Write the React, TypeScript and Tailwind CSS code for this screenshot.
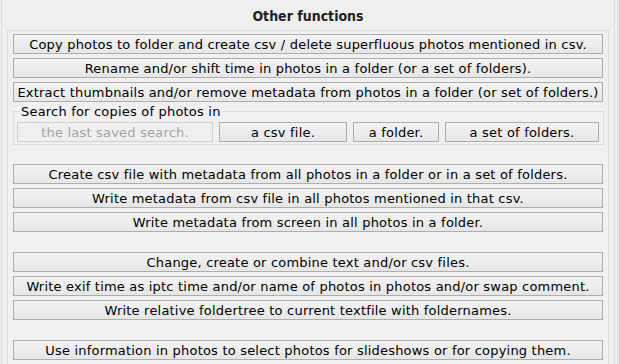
const rowsA = [
  "Copy photos to folder and create csv / delete superfluous photos mentioned in csv.",
  "Rename and/or shift time in photos in a folder (or a set of folders).",
  "Extract thumbnails and/or remove metadata from photos in a folder (or set of folders.)",
];

const rowsB = [
  "Create csv file with metadata from all photos in a folder or in a set of folders.",
  "Write metadata from csv file in all photos mentioned in that csv.",
  "Write metadata from screen in all photos in a folder.",
];

const rowsC = [
  "Change, create or combine text and/or csv files.",
  "Write exif time as iptc time and/or name of photos in photos and/or swap comment.",
  "Write relative foldertree to current textfile with foldernames.",
];

const Btn = ({ label, className = "" }: { label: string; className?: string }) => (
  <button
    className={`h-[20px] border border-[#adadad] bg-linear-to-b from-[#f3f3f3] to-[#e6e6e6] text-[13px] tracking-[0.2px] leading-none text-black whitespace-nowrap flex items-center justify-center ${className}`}
  >
    {label}
  </button>
);

const App = () => {
  return (
    <div
      className="w-[619px] h-[364px] overflow-hidden bg-[#f0f0f0] flex"
      style={{ fontFamily: '"DejaVu Sans", sans-serif' }}
    >
      <div className="ml-[1px] w-[614px] h-full border-x border-[#dcdcdc] bg-[#efefef] flex flex-col">
        <div
          className="h-[30px] shrink-0 flex items-center justify-center pt-[3px] text-[14px] font-bold text-[#1e1e1e]"
          style={{ fontFamily: '"DejaVu Sans Condensed", "DejaVu Sans", sans-serif' }}
        >
          Other functions
        </div>
        <div className="ml-[5px] w-[602px] flex-1 border-x border-t border-[#dcdcdc] bg-[#f0f0f0] px-[5px] pt-[3px] flex flex-col">
          <div className="flex flex-col gap-[4px]">
            {rowsA.map((r) => (
              <Btn key={r} label={r} />
            ))}
          </div>

          <fieldset className="mt-[2px] border border-[#dcdcdc] pl-[3px] pr-[4px] pb-[2px] pt-0">
            <legend className="ml-[3px] px-[1px] text-[13px] tracking-[0.2px] leading-[15px] text-black">
              Search for copies of photos in
            </legend>
            <div className="flex gap-[6px] mt-[3px]">
              <button className="w-[196px] h-[20px] border border-[#cfcfcf] bg-[#efefef] text-[13px] tracking-[0.2px] leading-none text-[#a3a3a3] flex items-center justify-center">
                the last saved search.
              </button>
              <Btn label="a csv file." className="w-[128px]" />
              <Btn label="a folder." className="w-[86px]" />
              <Btn label="a set of folders." className="w-[154px]" />
            </div>
          </fieldset>

          <div className="mt-[19px] flex flex-col gap-[4px]">
            {rowsB.map((r) => (
              <Btn key={r} label={r} />
            ))}
          </div>

          <div className="mt-[20px] flex flex-col gap-[4px]">
            {rowsC.map((r) => (
              <Btn key={r} label={r} />
            ))}
          </div>

          <div className="mt-[20px] flex flex-col">
            <Btn label="Use information in photos to select photos for slideshows or for copying them." />
          </div>
        </div>
      </div>
      <div className="ml-[2px] w-[1px] h-full bg-[#dcdcdc]" />
    </div>
  );
};

export default App;
